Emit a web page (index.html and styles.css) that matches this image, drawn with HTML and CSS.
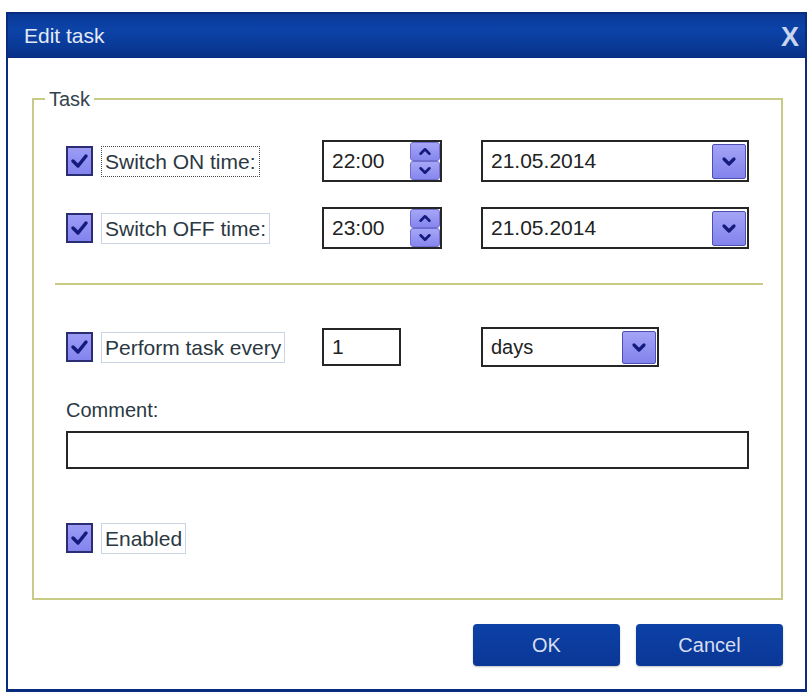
FILE: index.html
```html
<!DOCTYPE html>
<html lang="en">
<head>
    <meta charset="UTF-8" />
    <title>Edit task</title>
    <link rel="stylesheet" href="styles.css">
</head>
<body>
    <div class="dialog">
        <div class="titlebar">
            <span class="title">Edit task</span>
            <span class="close">X</span>
        </div>

        <div class="content">
            <div class="group">
                <span class="group-title">Task</span>

                <div class="row">
                    <div class="check-cell">
                        <span class="checkbox"><svg width="23" height="26" viewBox="0 0 23 26"><path d="M5 13 L10 18 L18 8" fill="none" stroke="#141b7c" stroke-width="3.5" stroke-linecap="round" stroke-linejoin="round"/></svg></span>
                        <span class="check-label focused">Switch ON time:</span>
                    </div>
                    <div class="field time-field">
                        <span class="value">22:00</span>
                        <span class="spin">
                            <span class="spin-btn"><svg width="24" height="17" viewBox="0 0 24 17"><path d="M7 11 L12 6 L17 11" fill="none" stroke="#141b7c" stroke-width="3" stroke-linecap="round" stroke-linejoin="round"/></svg></span>
                            <span class="spin-btn"><svg width="24" height="17" viewBox="0 0 24 17"><path d="M7 6 L12 11 L17 6" fill="none" stroke="#141b7c" stroke-width="3" stroke-linecap="round" stroke-linejoin="round"/></svg></span>
                        </span>
                    </div>
                    <div class="field date-field">
                        <span class="value">21.05.2014</span>
                        <span class="drop"><svg width="30" height="31" viewBox="0 0 30 31"><path d="M10 13 L15 18 L20 13" fill="none" stroke="#141b7c" stroke-width="3.2" stroke-linecap="round" stroke-linejoin="round"/></svg></span>
                    </div>
                </div>

                <div class="row row-off">
                    <div class="check-cell">
                        <span class="checkbox"><svg width="23" height="26" viewBox="0 0 23 26"><path d="M5 13 L10 18 L18 8" fill="none" stroke="#141b7c" stroke-width="3.5" stroke-linecap="round" stroke-linejoin="round"/></svg></span>
                        <span class="check-label">Switch OFF time:</span>
                    </div>
                    <div class="field time-field">
                        <span class="value">23:00</span>
                        <span class="spin">
                            <span class="spin-btn"><svg width="24" height="17" viewBox="0 0 24 17"><path d="M7 11 L12 6 L17 11" fill="none" stroke="#141b7c" stroke-width="3" stroke-linecap="round" stroke-linejoin="round"/></svg></span>
                            <span class="spin-btn"><svg width="24" height="17" viewBox="0 0 24 17"><path d="M7 6 L12 11 L17 6" fill="none" stroke="#141b7c" stroke-width="3" stroke-linecap="round" stroke-linejoin="round"/></svg></span>
                        </span>
                    </div>
                    <div class="field date-field">
                        <span class="value">21.05.2014</span>
                        <span class="drop"><svg width="30" height="31" viewBox="0 0 30 31"><path d="M10 13 L15 18 L20 13" fill="none" stroke="#141b7c" stroke-width="3.2" stroke-linecap="round" stroke-linejoin="round"/></svg></span>
                    </div>
                </div>

                <div class="divider"></div>

                <div class="row row-repeat">
                    <div class="check-cell">
                        <span class="checkbox"><svg width="23" height="26" viewBox="0 0 23 26"><path d="M5 13 L10 18 L18 8" fill="none" stroke="#141b7c" stroke-width="3.5" stroke-linecap="round" stroke-linejoin="round"/></svg></span>
                        <span class="check-label">Perform task every</span>
                    </div>
                    <div class="field count-field">
                        <span class="value">1</span>
                    </div>
                    <div class="field unit-field">
                        <span class="value">days</span>
                        <span class="drop"><svg width="30" height="31" viewBox="0 0 30 31"><path d="M10 13 L15 18 L20 13" fill="none" stroke="#141b7c" stroke-width="3.2" stroke-linecap="round" stroke-linejoin="round"/></svg></span>
                    </div>
                </div>

                <div class="comment-label">Comment:</div>
                <div class="field comment-field"></div>

                <div class="row row-enabled">
                    <div class="check-cell">
                        <span class="checkbox"><svg width="23" height="26" viewBox="0 0 23 26"><path d="M5 13 L10 18 L18 8" fill="none" stroke="#141b7c" stroke-width="3.5" stroke-linecap="round" stroke-linejoin="round"/></svg></span>
                        <span class="check-label">Enabled</span>
                    </div>
                </div>
            </div>

            <div class="buttons">
                <button class="btn">OK</button>
                <button class="btn">Cancel</button>
            </div>
        </div>
    </div>
</body>
</html>
```

FILE: styles.css
```css
body {
    margin: 0;
    background-color: #ffffff;
    font-family: "Liberation Sans", Arial, sans-serif;
    color: #2b3842;
}
.dialog {
    margin: 12px 0 0 6px;
    width: 801px;
    height: 680px;
    box-sizing: border-box;
    border: 2px solid #0a2c7e;
    border-bottom-width: 3px;
    background-color: #ffffff;
}
.titlebar {
    height: 44px;
    display: flex;
    align-items: center;
    justify-content: space-between;
    padding: 0 6px 0 16px;
    background: linear-gradient(to bottom, #0b3a98 0%, #0c43a8 35%, #0a3996 75%, #082e86 100%);
    color: #e3eaf7;
}
.title {
    font-size: 21px;
}
.close {
    font-size: 27px;
    font-weight: bold;
    color: #c9d5ee;
    margin-top: 2px;
}
.content {
    padding: 0 22px 0 24px;
}
.group {
    position: relative;
    margin-top: 40px;
    height: 502px;
    box-sizing: border-box;
    border: 2px solid #c7cb86;
    padding: 40px 0 0 32px;
}
.group-title {
    position: absolute;
    top: -12px;
    left: 11px;
    padding: 0 4px;
    background-color: #ffffff;
    font-size: 20px;
    line-height: 22px;
    color: #34434d;
}
.row {
    display: flex;
    align-items: center;
    height: 42px;
}
.row-off {
    margin-top: 25px;
}
.row-repeat {
    margin-top: 42px;
    height: 40px;
}
.row-enabled {
    margin-top: 53px;
    height: 32px;
}
.check-cell {
    width: 256px;
    display: flex;
    align-items: center;
}
.checkbox {
    width: 27px;
    height: 30px;
    box-sizing: border-box;
    border: 2px solid #2a2d72;
    background: linear-gradient(to bottom, #9c9cf6, #8383ee);
    display: flex;
    align-items: center;
    justify-content: center;
}
.check-label {
    margin-left: 8px;
    height: 31px;
    line-height: 29px;
    box-sizing: border-box;
    padding: 0 3px;
    border: 1px solid #cbd4e4;
    font-size: 21px;
    white-space: nowrap;
}
.check-label.focused {
    border: 1px dotted #4a4a4a;
}
.field {
    display: flex;
    align-items: center;
    box-sizing: border-box;
    border: 2px solid #262626;
    background-color: #ffffff;
    font-size: 21px;
    color: #222222;
}
.value {
    flex: 1;
    padding-left: 8px;
}
.time-field {
    width: 120px;
    height: 42px;
}
.date-field {
    width: 268px;
    height: 42px;
    margin-left: 39px;
}
.count-field {
    width: 79px;
    height: 38px;
}
.unit-field {
    width: 178px;
    height: 40px;
    margin-left: 80px;
    font-size: 20px;
}
.spin {
    width: 30px;
    height: 38px;
    margin-right: 0;
    display: flex;
    flex-direction: column;
}
.spin-btn {
    flex: 1;
    display: flex;
    align-items: center;
    justify-content: center;
    background: linear-gradient(to bottom, #a6a6f7, #8686ee);
    border: 1px solid #6f6fd2;
    border-radius: 3px;
}
.spin-btn svg {
    width: 22px;
    height: 15px;
}
.drop {
    width: 34px;
    height: 35px;
    margin-right: 1px;
    box-sizing: border-box;
    border: 1px solid #4e4fb2;
    border-radius: 2px;
    background: linear-gradient(to bottom, #a4a4f7, #8282ec);
    display: flex;
    align-items: center;
    justify-content: center;
}
.unit-field .drop {
    height: 33px;
}
.divider {
    margin: 34px 18px 0 -11px;
    height: 2px;
    background-color: #c7cb86;
}
.comment-label {
    margin-top: 31px;
    font-size: 20px;
    line-height: 24px;
    color: #2b3842;
}
.comment-field {
    margin-top: 9px;
    width: 683px;
    height: 38px;
}
.buttons {
    margin-top: 24px;
    display: flex;
    justify-content: flex-end;
    gap: 16px;
}
.btn {
    width: 147px;
    height: 42px;
    border: none;
    border-radius: 4px;
    background: linear-gradient(to bottom, #0c41a6, #0a3796);
    color: #d7def1;
    font-family: "Liberation Sans", Arial, sans-serif;
    font-size: 20px;
    box-shadow: 0 1px 2px rgba(0, 0, 0, 0.25);
}
```
